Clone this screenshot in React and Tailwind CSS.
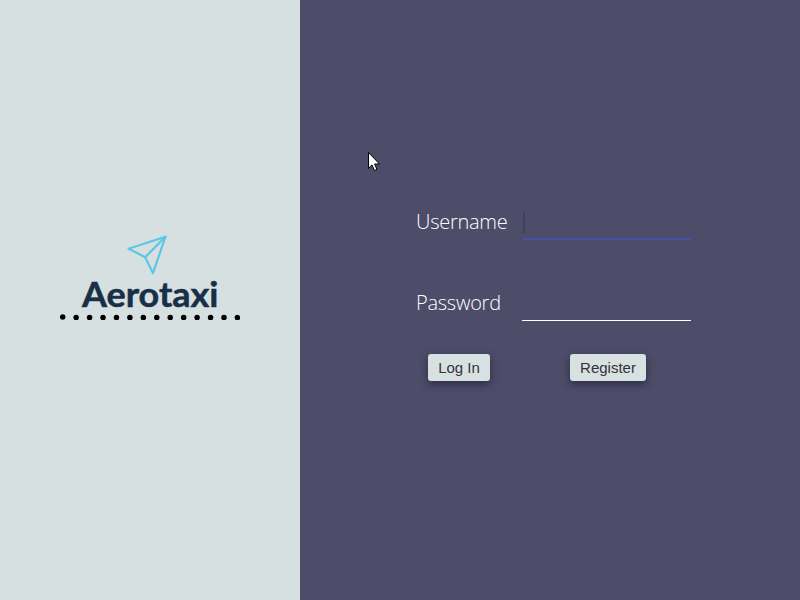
const DOTS = Array.from({ length: 14 }, (_, i) => 2.7 + i * 13.44);

function Logo() {
  return (
    <svg viewBox="0 0 180 90" className="h-[90px] w-[180px]">
      <g fill="none" stroke="#5cc6e6" strokeWidth="2.2" strokeLinejoin="round" strokeLinecap="round">
        <path d="M68.6 18.8 105.4 6.8 93 43.2 85.2 27.2Z" />
        <path d="M85.2 27.2 105.4 6.8" />
      </g>
      <text
        x="22"
        y="77.4"
        textLength="136.5"
        lengthAdjust="spacingAndGlyphs"
        fill="#172f47"
        stroke="#172f47"
        strokeWidth="0.5"
        className="font-['Lato',sans-serif] text-[34px] font-bold"
      >
        Aerotaxi
      </text>
      {DOTS.map((x, i) => (
        <circle key={x} cx={x} cy={i === 0 ? 87 : 87.6} r="2.75" />
      ))}
    </svg>
  );
}

function Field({ label, active }) {
  return (
    <div className="flex h-[33px] items-start">
      <span className="w-[106px] font-['Open_Sans','Noto_Sans',sans-serif] text-[20px] leading-[28px] font-light tracking-[-0.25px] whitespace-nowrap text-white">
        {label}
      </span>
      {active ? (
        <div className="ml-px h-[32px] w-[168px] border-b-2 border-[#4353a4] pt-1">
          <div className="h-[21px] w-[2px] bg-[#414059]" />
        </div>
      ) : (
        <div className="h-[32px] w-[169px] border-b border-white" />
      )}
    </div>
  );
}

function Button({ children, className }) {
  return (
    <button
      className={`h-[27px] rounded-[3px] bg-[#d8e1e1] text-center font-['Liberation_Sans',sans-serif] text-[15px] leading-[27px] whitespace-nowrap text-[#333] shadow-[0_3px_8px_rgba(20,20,40,0.6)] ${className}`}
    >
      {children}
    </button>
  );
}

export default function App() {
  return (
    <div className="relative flex h-[600px] w-[800px] overflow-hidden bg-[#4d4d6a]">
      <aside className="w-[300px] bg-[#d7e0e0] pt-[230px] pl-[60px]">
        <Logo />
      </aside>
      <main className="flex-1 pt-[208px] pl-[116px]">
        <Field label="Username" active />
        <div className="mt-12">
          <Field label="Password" />
        </div>
        <div className="mt-8 ml-3 flex gap-20">
          <Button className="w-[62px]">Log In</Button>
          <Button className="w-[76px]">Register</Button>
        </div>
      </main>
      <svg viewBox="0 0 12 20" className="absolute top-[152px] left-[368px] h-[20px] w-[12px]">
        <path
          d="M.5.5V16.3L4 12.9 6.5 18.5 9 17.5 6.6 12H11.5Z"
          fill="#fff"
          stroke="#000"
          strokeWidth="1"
        />
      </svg>
    </div>
  );
}
